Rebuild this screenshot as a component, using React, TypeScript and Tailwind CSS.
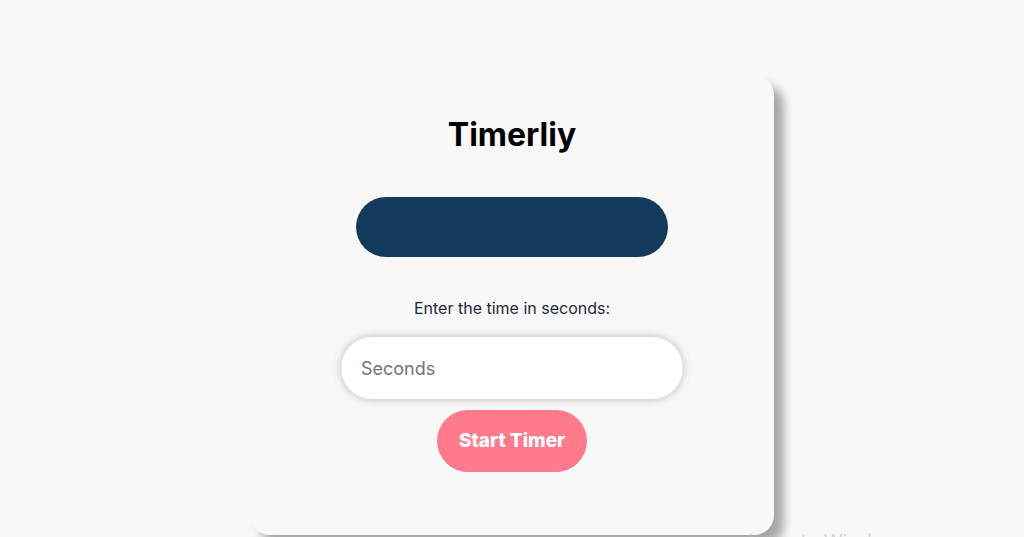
import React from "react";

const App = () => {
  return (
    <div className="relative min-h-screen w-full overflow-hidden bg-[#f8f8f8] font-['Inter',sans-serif]">
      <div className="flex justify-center pt-[75px]">
        <div className="flex h-[460px] w-[524px] flex-col items-center rounded-[20px] bg-[#f8f8f8] shadow-[10px_10px_10px_#a8a8a8]">
          <h1 className="mt-[36px] text-[32px] font-bold leading-[48px] text-black">
            Timerliy
          </h1>
          <div className="mt-[38px] h-[60px] w-[312px] rounded-full bg-[#133a5c]"></div>
          <p className="mt-[39px] text-[16px] leading-[24px] text-[#1e2a3a]">
            Enter the time in seconds:
          </p>
          <input
            type="number"
            placeholder="Seconds"
            className="mt-[17px] h-[62px] w-[342px] rounded-full bg-white px-5 text-[18px] text-[#333] placeholder:text-[#757575] shadow-[0_0_10px_rgba(0,0,0,0.25)] outline-none"
          />
          <button className="mt-[11px] h-[62px] w-[150px] cursor-pointer rounded-full bg-[#ff7b8b] text-[19px] font-extrabold text-white">
            Start Timer
          </button>
        </div>
      </div>
      <div className="absolute left-[745px] top-[526px] whitespace-nowrap font-['Open_Sans',sans-serif] text-[20px] text-[#b9b9b9]/60">
        Activate Windows
      </div>
    </div>
  );
};

export default App;
